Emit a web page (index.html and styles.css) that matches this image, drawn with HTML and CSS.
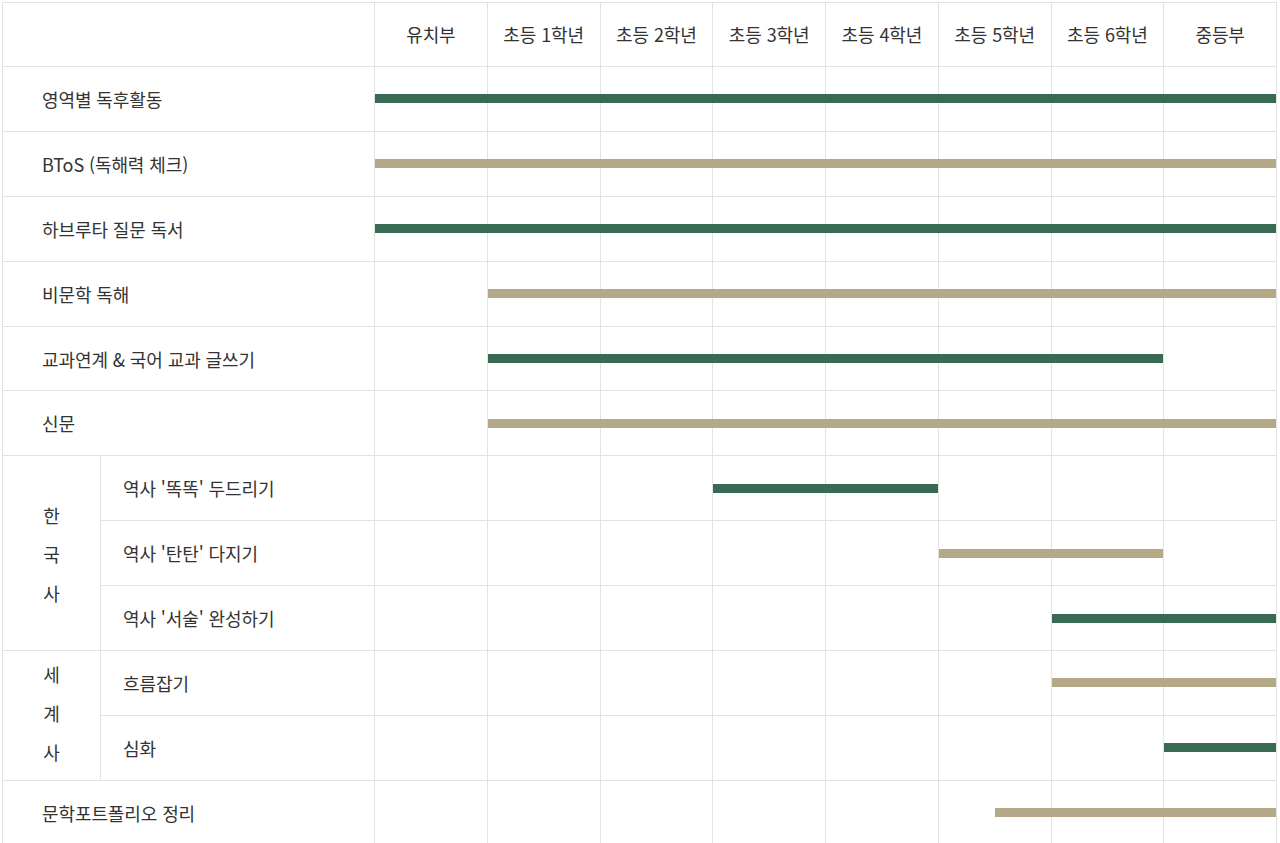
FILE: index.html
```html
<!DOCTYPE html>
<html lang="ko">
<head>
<meta charset="utf-8">
<title>독서 커리큘럼</title>
<link rel="stylesheet" href="styles.css">
</head>
<body>
<div class="page">
  <div class="chart">
    <div class="corner"></div>
    <div class="track head">
      <div class="c">유치부</div>
      <div class="c">초등 1학년</div>
      <div class="c">초등 2학년</div>
      <div class="c">초등 3학년</div>
      <div class="c">초등 4학년</div>
      <div class="c">초등 5학년</div>
      <div class="c">초등 6학년</div>
      <div class="c">중등부</div>
    </div>

    <div class="label">영역별 독후활동</div>
    <div class="track"><div class="c"></div><div class="c"></div><div class="c"></div><div class="c"></div><div class="c"></div><div class="c"></div><div class="c"></div><div class="c"></div><div class="bar green" style="grid-column: 1 / 17"></div></div>

    <div class="label">BToS (독해력 체크)</div>
    <div class="track"><div class="c"></div><div class="c"></div><div class="c"></div><div class="c"></div><div class="c"></div><div class="c"></div><div class="c"></div><div class="c"></div><div class="bar tan" style="grid-column: 1 / 17"></div></div>

    <div class="label">하브루타 질문 독서</div>
    <div class="track"><div class="c"></div><div class="c"></div><div class="c"></div><div class="c"></div><div class="c"></div><div class="c"></div><div class="c"></div><div class="c"></div><div class="bar green" style="grid-column: 1 / 17"></div></div>

    <div class="label">비문학 독해</div>
    <div class="track"><div class="c"></div><div class="c"></div><div class="c"></div><div class="c"></div><div class="c"></div><div class="c"></div><div class="c"></div><div class="c"></div><div class="bar tan" style="grid-column: 3 / 17"></div></div>

    <div class="label">교과연계 &amp; 국어 교과 글쓰기</div>
    <div class="track"><div class="c"></div><div class="c"></div><div class="c"></div><div class="c"></div><div class="c"></div><div class="c"></div><div class="c"></div><div class="c"></div><div class="bar green" style="grid-column: 3 / 15"></div></div>

    <div class="label">신문</div>
    <div class="track"><div class="c"></div><div class="c"></div><div class="c"></div><div class="c"></div><div class="c"></div><div class="c"></div><div class="c"></div><div class="c"></div><div class="bar tan" style="grid-column: 3 / 17"></div></div>

    <div class="group span3">한<br>국<br>사</div>
    <div class="sublabel">역사 '똑똑' 두드리기</div>
    <div class="track"><div class="c"></div><div class="c"></div><div class="c"></div><div class="c"></div><div class="c"></div><div class="c"></div><div class="c"></div><div class="c"></div><div class="bar green" style="grid-column: 7 / 11"></div></div>

    <div class="sublabel">역사 '탄탄' 다지기</div>
    <div class="track"><div class="c"></div><div class="c"></div><div class="c"></div><div class="c"></div><div class="c"></div><div class="c"></div><div class="c"></div><div class="c"></div><div class="bar tan" style="grid-column: 11 / 15"></div></div>

    <div class="sublabel">역사 '서술' 완성하기</div>
    <div class="track"><div class="c"></div><div class="c"></div><div class="c"></div><div class="c"></div><div class="c"></div><div class="c"></div><div class="c"></div><div class="c"></div><div class="bar green" style="grid-column: 13 / 17"></div></div>

    <div class="group span2">세<br>계<br>사</div>
    <div class="sublabel">흐름잡기</div>
    <div class="track"><div class="c"></div><div class="c"></div><div class="c"></div><div class="c"></div><div class="c"></div><div class="c"></div><div class="c"></div><div class="c"></div><div class="bar tan" style="grid-column: 13 / 17"></div></div>

    <div class="sublabel">심화</div>
    <div class="track"><div class="c"></div><div class="c"></div><div class="c"></div><div class="c"></div><div class="c"></div><div class="c"></div><div class="c"></div><div class="c"></div><div class="bar green" style="grid-column: 15 / 17"></div></div>

    <div class="label">문학포트폴리오 정리</div>
    <div class="track"><div class="c"></div><div class="c"></div><div class="c"></div><div class="c"></div><div class="c"></div><div class="c"></div><div class="c"></div><div class="c"></div><div class="bar tan" style="grid-column: 12 / 17"></div></div>
  </div>
</div>
</body>
</html>
```

FILE: styles.css
```css
html, body {
  margin: 0;
  padding: 0;
  overflow: hidden;
  background: #fff;
}

body {
  font-family: "Noto Sans CJK KR", "Noto Sans", sans-serif;
  font-size: 18px;
  letter-spacing: -0.1px;
  color: #333;
}

.page {
  padding: 2px 3px 0 2px;
}

.chart {
  display: grid;
  grid-template-columns: 97px 273px 1fr;
  grid-template-rows: 63px repeat(12, 63.9px);
  gap: 1px;
  padding: 1px;
  background: #e2e2e2;
}

.corner {
  grid-column: span 2;
  background: #fff;
}

.label {
  grid-column: span 2;
  background: #fff;
  display: flex;
  align-items: center;
  padding-left: 39px;
}

.sublabel {
  background: #fff;
  display: flex;
  align-items: center;
  padding-left: 22px;
}

.group {
  background: #fff;
  display: flex;
  align-items: center;
  justify-content: center;
  text-align: center;
  line-height: 39px;
}

.group.span3 {
  grid-row: span 3;
  padding-top: 3px;
}

.group.span2 {
  grid-row: span 2;
  padding-bottom: 3px;
}

.track {
  display: grid;
  grid-template-columns: repeat(16, 1fr);
  grid-template-rows: 100%;
  column-gap: 1px;
  background: #e2e2e2;
}

.track .c {
  grid-row: 1;
  background: #fff;
}

.track .c:nth-child(1) { grid-column: 1 / 3; }
.track .c:nth-child(2) { grid-column: 3 / 5; }
.track .c:nth-child(3) { grid-column: 5 / 7; }
.track .c:nth-child(4) { grid-column: 7 / 9; }
.track .c:nth-child(5) { grid-column: 9 / 11; }
.track .c:nth-child(6) { grid-column: 11 / 13; }
.track .c:nth-child(7) { grid-column: 13 / 15; }
.track .c:nth-child(8) { grid-column: 15 / 17; }

.head .c {
  display: flex;
  align-items: center;
  justify-content: center;
  white-space: nowrap;
  padding-bottom: 2px;
}

.bar {
  grid-row: 1;
  align-self: center;
  height: 9px;
  z-index: 1;
}

.bar.green {
  background: #386a54;
}

.bar.tan {
  background: #b3a988;
}
```
